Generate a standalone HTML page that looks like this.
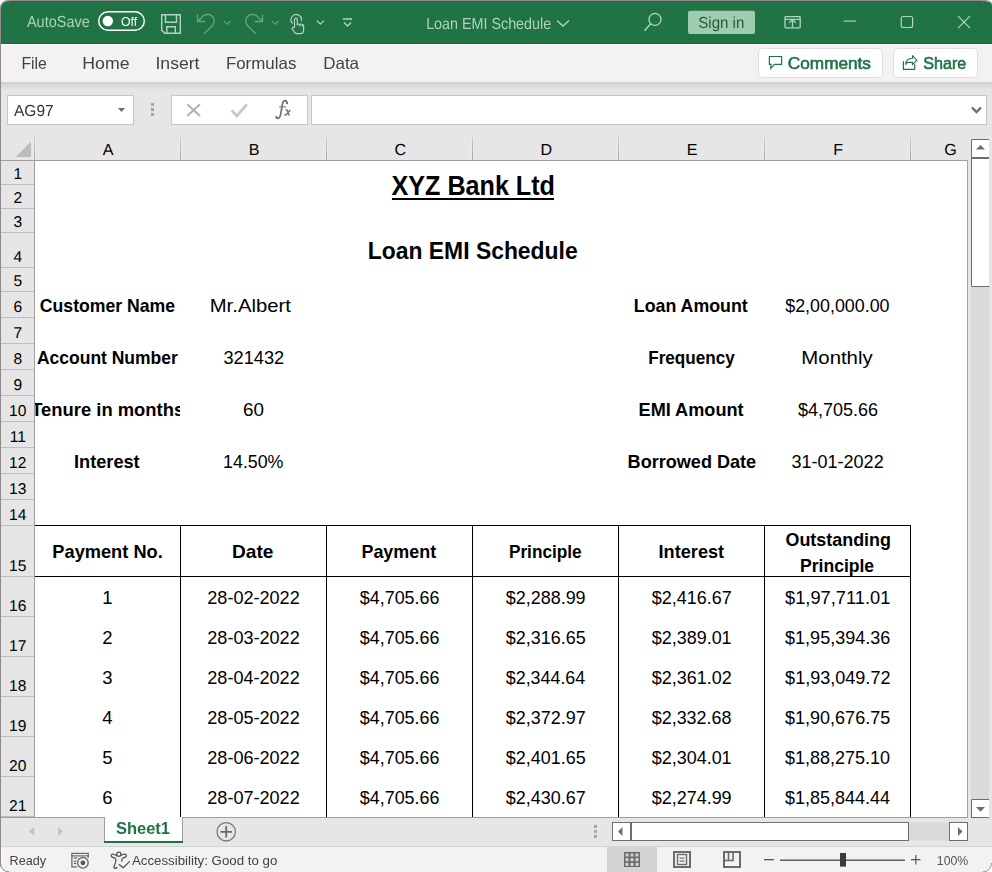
<!DOCTYPE html><html><head><meta charset="utf-8"><style>html,body{margin:0;padding:0;background:#fff;overflow:hidden}svg{display:block;font-family:"Liberation Sans",sans-serif}</style></head><body><svg width="992" height="872" viewBox="0 0 992 872"><rect x="0" y="0" width="992" height="872" fill="#ffffff"/><path d="M0.5,872 L0.5,8.5 Q0.5,0.5 8.5,0.5 L983.5,0.5 Q991.5,0.5 992,4" fill="#e6e6e6" stroke="#8f8a8c" stroke-width="1"/><rect x="1" y="9" width="991" height="863" fill="#e6e6e6"/><path d="M1,9 Q1,1 9,1 L983,1 Q991,1 992,5 L992,44 L1,44 Z" fill="#217346"/><rect x="1" y="43" width="991" height="1" fill="#176a3c"/><rect x="1" y="44" width="991" height="38" fill="#f3f2f1"/><rect x="1" y="44" width="991" height="1.5" fill="#fdfcfc"/><defs><linearGradient id="sh" x1="0" y1="0" x2="0" y2="1"><stop offset="0" stop-color="#cfcfcf"/><stop offset="1" stop-color="#e6e6e6"/></linearGradient></defs><rect x="1" y="82" width="991" height="8" fill="url(#sh)"/><rect x="7.5" y="95.5" width="126" height="29" fill="#ffffff" stroke="#c6c6c6"/><path d="M118,108 L125,108 L121.5,112 Z" fill="#6d6d6d"/><rect x="151" y="103.0" width="3" height="3" fill="#a6a6a6"/><rect x="151" y="108.0" width="3" height="3" fill="#a6a6a6"/><rect x="151" y="113.0" width="3" height="3" fill="#a6a6a6"/><rect x="171.5" y="95.5" width="136" height="29" fill="#ffffff" stroke="#c6c6c6"/><path d="M187.2,104.2 L200,116 M200,104.2 L187.2,116" stroke="#b5b5b5" stroke-width="2.2"/><path d="M231.6,110.2 L236.8,115.8 L246.8,104.3" stroke="#c8c8c8" stroke-width="2.8" fill="none"/><path d="M287.1,103 Q286.6,100.3 284.6,100.6 Q283,101 282.4,104.5 L280.7,114.2 Q279.9,118.5 277.8,118.4 Q276.4,118.3 276.3,117.3" fill="none" stroke="#6f6f6f" stroke-width="1.7"/><circle cx="287" cy="103.2" r="1.1" fill="#6f6f6f"/><circle cx="276.4" cy="117.2" r="1.1" fill="#6f6f6f"/><path d="M279.2,106.9 L286,106.9" stroke="#8a8a8a" stroke-width="1.3"/><path d="M285.6,110 Q287,109.4 287.6,111.4 L288.4,114 Q288.9,115.2 289.6,114.6 M290.4,110 Q289.4,111 287.2,113.4 Q285.6,115.2 284.3,115" fill="none" stroke="#6f6f6f" stroke-width="1.5"/><rect x="311.5" y="95.5" width="675" height="29" fill="#ffffff" stroke="#c6c6c6"/><path d="M972,107.5 L976.5,112 L981,107.5" stroke="#6d6d6d" stroke-width="2.4" fill="none"/><rect x="1" y="137" width="966" height="23" fill="#e6e6e6"/><path d="M31,141.5 L31,157 L15.5,157 Z" fill="#bdbdbd"/><defs><linearGradient id="cs" x1="0" y1="0" x2="0" y2="1"><stop offset="0" stop-color="#cfcfcf"/><stop offset="1" stop-color="#a3a3a3"/></linearGradient></defs><rect x="33" y="137" width="3" height="23" fill="#ebebeb"/><rect x="34" y="137" width="1" height="23" fill="url(#cs)"/><rect x="179" y="137" width="3" height="23" fill="#ebebeb"/><rect x="180" y="137" width="1" height="23" fill="url(#cs)"/><rect x="325" y="137" width="3" height="23" fill="#ebebeb"/><rect x="326" y="137" width="1" height="23" fill="url(#cs)"/><rect x="471" y="137" width="3" height="23" fill="#ebebeb"/><rect x="472" y="137" width="1" height="23" fill="url(#cs)"/><rect x="617" y="137" width="3" height="23" fill="#ebebeb"/><rect x="618" y="137" width="1" height="23" fill="url(#cs)"/><rect x="763" y="137" width="3" height="23" fill="#ebebeb"/><rect x="764" y="137" width="1" height="23" fill="url(#cs)"/><rect x="909" y="137" width="3" height="23" fill="#ebebeb"/><rect x="910" y="137" width="1" height="23" fill="url(#cs)"/><rect x="1" y="160" width="967" height="1" fill="#9e9e9e"/><rect x="1" y="161" width="33" height="656" fill="#e6e6e6"/><rect x="1" y="184" width="33" height="1" fill="#bebebe"/><rect x="1" y="208" width="33" height="1" fill="#bebebe"/><rect x="1" y="232" width="33" height="1" fill="#bebebe"/><rect x="1" y="267" width="33" height="1" fill="#bebebe"/><rect x="1" y="291" width="33" height="1" fill="#bebebe"/><rect x="1" y="317" width="33" height="1" fill="#bebebe"/><rect x="1" y="343" width="33" height="1" fill="#bebebe"/><rect x="1" y="369" width="33" height="1" fill="#bebebe"/><rect x="1" y="395" width="33" height="1" fill="#bebebe"/><rect x="1" y="421" width="33" height="1" fill="#bebebe"/><rect x="1" y="447" width="33" height="1" fill="#bebebe"/><rect x="1" y="473" width="33" height="1" fill="#bebebe"/><rect x="1" y="499" width="33" height="1" fill="#bebebe"/><rect x="1" y="525" width="33" height="1" fill="#bebebe"/><rect x="1" y="576" width="33" height="1" fill="#bebebe"/><rect x="1" y="616" width="33" height="1" fill="#bebebe"/><rect x="1" y="656" width="33" height="1" fill="#bebebe"/><rect x="1" y="696" width="33" height="1" fill="#bebebe"/><rect x="1" y="736" width="33" height="1" fill="#bebebe"/><rect x="1" y="776" width="33" height="1" fill="#bebebe"/><rect x="1" y="816" width="33" height="1" fill="#bebebe"/><rect x="34" y="160" width="1" height="657" fill="#9e9e9e"/><rect x="35" y="161" width="932" height="656" fill="#ffffff"/><rect x="967" y="160" width="1" height="657" fill="#a3a3a3"/><rect x="35" y="525" width="876" height="1" fill="#000"/><rect x="35" y="576" width="876" height="1" fill="#000"/><rect x="180" y="525" width="1" height="292" fill="#000"/><rect x="326" y="525" width="1" height="292" fill="#000"/><rect x="472" y="525" width="1" height="292" fill="#000"/><rect x="618" y="525" width="1" height="292" fill="#000"/><rect x="764" y="525" width="1" height="292" fill="#000"/><rect x="910" y="525" width="1" height="292" fill="#000"/><rect x="392" y="198" width="162" height="2" fill="#000"/><rect x="968" y="137" width="23" height="680" fill="#e6e6e6"/><rect x="971" y="139" width="18" height="679" fill="#dadada"/><rect x="971" y="139" width="18" height="19" fill="#ffffff"/><path d="M971.5,158 L971.5,139.5 L989,139.5" fill="none" stroke="#6e6e6e"/><path d="M976,149.5 L985,149.5 L980.5,145 Z" fill="#6e6e6e"/><rect x="971" y="158" width="18" height="129" fill="#ffffff"/><path d="M971.5,158 L971.5,286.5 L989,286.5" fill="none" stroke="#6e6e6e" stroke-linecap="square"/><rect x="971" y="157" width="18" height="2" fill="#6e6e6e"/><rect x="971" y="799" width="18" height="19" fill="#ffffff"/><path d="M989,799.5 L971.5,799.5 L971.5,817.5 L989,817.5" fill="none" stroke="#6e6e6e"/><path d="M976,807 L985,807 L980.5,811.8 Z" fill="#6e6e6e"/><rect x="1" y="817" width="991" height="29" fill="#e6e6e6"/><rect x="1" y="817" width="967" height="1" fill="#9e9e9e"/><rect x="971" y="817" width="18" height="1" fill="#6e6e6e"/><rect x="104" y="817" width="79" height="26" fill="#ffffff"/><rect x="104" y="817" width="1" height="25" fill="#9e9e9e"/><rect x="182" y="817" width="1" height="25" fill="#9e9e9e"/><rect x="104" y="841" width="79" height="2" fill="#217346"/><path d="M34.2,827 L34.2,836 L29,831.5 Z" fill="#c2c2c2"/><path d="M58.2,827 L58.2,836 L63,831.5 Z" fill="#c2c2c2"/><circle cx="226.2" cy="831.8" r="9.2" fill="none" stroke="#7a7a7a" stroke-width="1.3"/><path d="M220.5,831.8 L232,831.8 M226.2,826 L226.2,837.5" stroke="#6a6a6a" stroke-width="1.8"/><rect x="594" y="824.9" width="3" height="3" fill="#a6a6a6"/><rect x="594" y="829.9" width="3" height="3" fill="#a6a6a6"/><rect x="594" y="834.9" width="3" height="3" fill="#a6a6a6"/><rect x="612.5" y="822.5" width="355" height="18" fill="#dadada"/><rect x="612.5" y="822.5" width="18" height="18" fill="#ffffff" stroke="#6e6e6e"/><path d="M622.5,827 L622.5,836 L618,831.5 Z" fill="#6e6e6e"/><rect x="630.5" y="822.5" width="278" height="18" fill="#ffffff" stroke="#6e6e6e"/><rect x="630" y="822" width="2" height="19" fill="#6e6e6e"/><rect x="949.5" y="822.5" width="18" height="18" fill="#ffffff" stroke="#6e6e6e"/><path d="M958,827 L958,836 L962.5,831.5 Z" fill="#6e6e6e"/><rect x="1" y="846" width="991" height="26" fill="#f3f2f1"/><rect x="1" y="846" width="991" height="1" fill="#d4d4d4"/><rect x="1" y="847" width="1" height="25" fill="#fbfbfb"/><path d="M0,864 Q0.5,871.5 9,872.5 L0,872.5 Z" fill="#ffffff"/><path d="M0.5,863 Q1,871.5 9.5,872" fill="none" stroke="#8f8a8c" stroke-width="1"/><path d="M992,864 Q991.5,871.5 983,872.5 L992,872.5 Z" fill="#ffffff"/><path d="M991.5,863 Q991,871.5 982.5,872" fill="none" stroke="#9a9a9a" stroke-width="1"/><rect x="607" y="847" width="50" height="25" fill="#d4d4d4"/><rect x="624" y="852" width="16" height="15" fill="#6b6b6b"/><rect x="625.5" y="853.5" width="3" height="3" fill="#d4d4d4"/><rect x="625.5" y="858.2" width="3" height="3" fill="#d4d4d4"/><rect x="625.5" y="862.9" width="3" height="3" fill="#d4d4d4"/><rect x="630.5" y="853.5" width="3" height="3" fill="#d4d4d4"/><rect x="630.5" y="858.2" width="3" height="3" fill="#d4d4d4"/><rect x="630.5" y="862.9" width="3" height="3" fill="#d4d4d4"/><rect x="635.5" y="853.5" width="3" height="3" fill="#d4d4d4"/><rect x="635.5" y="858.2" width="3" height="3" fill="#d4d4d4"/><rect x="635.5" y="862.9" width="3" height="3" fill="#d4d4d4"/><rect x="674" y="852" width="16" height="15" fill="none" stroke="#6b6b6b" stroke-width="2"/><rect x="677.5" y="854.5" width="9" height="10" fill="none" stroke="#6b6b6b" stroke-width="1.4"/><rect x="679.5" y="857.5" width="5" height="1.2" fill="#6b6b6b"/><rect x="679.5" y="860.5" width="5" height="1.2" fill="#6b6b6b"/><rect x="724" y="852" width="16" height="15" fill="none" stroke="#6b6b6b" stroke-width="2"/><path d="M724,860.5 L733,860.5 L733,852 M728.5,852 L728.5,860" stroke="#6b6b6b" stroke-width="1.6" fill="none"/><rect x="764" y="859" width="10" height="1.3" fill="#555"/><rect x="780" y="859.5" width="125" height="1.4" fill="#555"/><rect x="840" y="853" width="6" height="13.6" fill="#3a3a3a"/><path d="M911,859.7 L920.5,859.7 M915.8,855 L915.8,864.4" stroke="#555" stroke-width="1.2"/><rect x="98.7" y="11.7" width="45.6" height="18.6" rx="9.3" fill="none" stroke="#ffffff" stroke-width="1.4"/><circle cx="107.8" cy="21" r="5.2" fill="#ffffff"/><path d="M161.7,14.7 L180.3,14.7 L180.3,33.3 L164.7,33.3 L161.7,30.3 Z" fill="none" stroke="#b3d5bf" stroke-width="1.4"/><path d="M165.5,14.7 L165.5,22.3 L176.5,22.3 L176.5,14.7" fill="none" stroke="#b3d5bf" stroke-width="1.4"/><path d="M166.8,33.3 L166.8,26.7 L175.3,26.7 L175.3,33.3" fill="none" stroke="#b3d5bf" stroke-width="1.4"/><path d="M204,34 L212,26 Q216,22 213,17 Q209,12 203,16 L197.5,21.5 M197.5,14.5 L197.5,21.5 L205,21.5" fill="none" stroke="#6aa283" stroke-width="1.3"/><path d="M224,21 L227.3,24.3 L230.6,21" fill="none" stroke="#6aa283" stroke-width="1.1"/><path d="M256,34 L248,26 Q244,22 247,17 Q251,12 257,16 L262.5,21.5 M262.5,14.5 L262.5,21.5 L255,21.5" fill="none" stroke="#6aa283" stroke-width="1.3"/><path d="M272,21 L275.3,24.3 L278.6,21" fill="none" stroke="#6aa283" stroke-width="1.1"/><path d="M292.6,23.5 A5.2,5.2 0 1 1 301.2,21.3" fill="none" stroke="#b3d5bf" stroke-width="1.2"/><path d="M294.5,27.6 L294.5,19.5 Q294.6,18.1 296,18.1 Q297.3,18.1 297.3,19.5 L297.3,25 Q297.6,23.9 298.6,24 Q299.6,24.1 299.8,25 Q300.2,23.9 301.2,24 Q302.2,24.1 302.4,25 Q302.8,24.3 303.3,24.8 Q303.6,25.1 303.6,26 L303.6,30.5 Q303.4,33.6 300.5,33.6 L297,33.6 Q295.6,33.6 294.6,32.5 L292.4,29.4 Q291.8,28.2 292.8,27.6 Q293.6,27.2 294.5,27.8 M299.8,25 L299.8,26.5 M302.4,25 L302.4,26.5" fill="none" stroke="#b3d5bf" stroke-width="1.2" stroke-linejoin="round"/><path d="M316.8,20.6 L320.3,24.1 L323.8,20.6" fill="none" stroke="#b3d5bf" stroke-width="1.3"/><path d="M343,19 L352,19 M344,22.5 L347.5,26 L351,22.5" fill="none" stroke="#b3d5bf" stroke-width="1.3"/><path d="M557,20.5 L563,26 L569,20.5" fill="none" stroke="#b3d5bf" stroke-width="1.3"/><circle cx="655" cy="19.4" r="6" fill="none" stroke="#b3d5bf" stroke-width="1.3"/><path d="M650.6,23.8 L644.5,30.8" stroke="#b3d5bf" stroke-width="1.4"/><rect x="688" y="10.7" width="67" height="23.4" rx="2" fill="#9fcbae"/><rect x="785" y="16.6" width="15.2" height="11.2" rx="0.8" fill="none" stroke="#b3d5bf" stroke-width="1.3"/><path d="M785,19.4 L800.2,19.4" stroke="#b3d5bf" stroke-width="1.2"/><path d="M792.5,27.5 L792.5,19.5 M789.3,22.8 L792.5,19.6 L795.7,22.8" fill="none" stroke="#b3d5bf" stroke-width="1.3"/><path d="M843.7,21.1 L856.1,21.1" stroke="#b3d5bf" stroke-width="1.1"/><rect x="901.2" y="16.5" width="11.4" height="11" rx="2" fill="none" stroke="#b3d5bf" stroke-width="1.2"/><path d="M958,16.2 L970,28.2 M970,16.2 L958,28.2" stroke="#b3d5bf" stroke-width="1.2"/><rect x="758.5" y="48.5" width="124" height="29" rx="4" fill="#ffffff" stroke="#e1dfdd"/><rect x="893.5" y="48.5" width="84" height="29" rx="4" fill="#ffffff" stroke="#e1dfdd"/><path d="M769.4,56.5 L781.6,56.5 L781.6,64.3 L774.4,64.3 L770.8,68.3 L771,64.3 L769.4,64.3 Z" fill="none" stroke="#217346" stroke-width="1.2" stroke-linejoin="miter"/><path d="M903.4,61.2 L903.4,69.3 L914.7,69.3 L914.7,64.3" fill="none" stroke="#217346" stroke-width="1.2"/><path d="M905.7,64.5 Q906,58.5 912.5,58.3 L912.5,55.5 L916.9,60.4 L912.5,64.6 L912.5,62.4 L908,62.4 Q906.5,62.5 905.7,64.5 Z" fill="none" stroke="#217346" stroke-width="1.1" stroke-linejoin="round"/><path d="M88.2,858 L88.2,853.3 L71.9,853.3 L71.9,866.8 L77,866.8" fill="none" stroke="#6b6b6b" stroke-width="1.3"/><rect x="71.5" y="855.3" width="17" height="1.2" fill="#6b6b6b"/><rect x="73.8" y="857.4" width="3.5" height="1.3" fill="#6b6b6b"/><rect x="73.8" y="860.6" width="2.5" height="1.3" fill="#6b6b6b"/><rect x="73.8" y="862.8" width="2.5" height="1.3" fill="#6b6b6b"/><circle cx="82.9" cy="862.8" r="5.3" fill="#f3f2f1" stroke="#6b6b6b" stroke-width="1.4"/><circle cx="82.9" cy="862.8" r="2.4" fill="#555"/><circle cx="118.85" cy="854.2" r="2.1" fill="none" stroke="#555" stroke-width="1.3"/><path d="M116.7,855.6 Q114,854 112.5,854.1 Q110.8,854.6 111.4,856.5 Q112.2,857.6 114.8,857.9 Q116,858.6 115.8,861 Q115.5,863.5 114.5,865 Q113.3,867.5 114.6,868.3 Q115.8,868.8 116.9,867.5 M120.9,855.6 Q123,854 124.4,854.1 Q126.6,854.4 126.3,856 Q125.8,857.4 123.5,857.8 Q121.8,858.3 121.8,860 L121.8,861.3 M119.3,864.4 L123.2,867.8 L129.4,861.6" fill="none" stroke="#555" stroke-width="1.3" stroke-linecap="round"/><text x="26.91" y="26.60" font-size="16.00" font-weight="normal" textLength="62.86" lengthAdjust="spacingAndGlyphs" fill="#acd4b9" text-rendering="geometricPrecision" style="will-change:transform">AutoSave</text><text x="120.94" y="26.00" font-size="12.50" font-weight="normal" textLength="16.18" lengthAdjust="spacingAndGlyphs" fill="#ffffff" style="will-change:transform">Off</text><text x="426.15" y="29.00" font-size="16.00" font-weight="normal" textLength="125.03" lengthAdjust="spacingAndGlyphs" fill="#acd4b9" text-rendering="geometricPrecision" style="will-change:transform">Loan EMI Schedule</text><text x="698.25" y="28.00" font-size="16.00" font-weight="normal" textLength="46.11" lengthAdjust="spacingAndGlyphs" fill="#1f5e3b" text-rendering="geometricPrecision" style="will-change:transform">Sign in</text><text x="21.41" y="69.00" font-size="16.50" font-weight="normal" textLength="25.44" lengthAdjust="spacingAndGlyphs" fill="#424242" style="will-change:transform">File</text><text x="82.34" y="69.00" font-size="16.50" font-weight="normal" textLength="47.18" lengthAdjust="spacingAndGlyphs" fill="#424242" style="will-change:transform">Home</text><text x="155.43" y="69.00" font-size="16.50" font-weight="normal" textLength="44.11" lengthAdjust="spacingAndGlyphs" fill="#424242" style="will-change:transform">Insert</text><text x="225.91" y="69.00" font-size="16.50" font-weight="normal" textLength="70.42" lengthAdjust="spacingAndGlyphs" fill="#424242" style="will-change:transform">Formulas</text><text x="323.16" y="69.00" font-size="16.50" font-weight="normal" textLength="35.91" lengthAdjust="spacingAndGlyphs" fill="#424242" style="will-change:transform">Data</text><text x="787.85" y="69.00" font-size="16.50" font-weight="normal" textLength="83.12" lengthAdjust="spacingAndGlyphs" fill="#217346" style="will-change:transform" stroke="#217346" stroke-width="0.6">Comments</text><text x="923.23" y="69.00" font-size="16.50" font-weight="normal" textLength="43.09" lengthAdjust="spacingAndGlyphs" fill="#217346" style="will-change:transform" stroke="#217346" stroke-width="0.6">Share</text><text x="13.99" y="115.90" font-size="16.00" font-weight="normal" textLength="39.64" lengthAdjust="spacingAndGlyphs" fill="#333333" text-rendering="geometricPrecision" style="will-change:transform">AG97</text><text x="108.20" y="155.00" font-size="16.10" font-weight="normal" text-anchor="middle" fill="#000000" text-rendering="geometricPrecision">A</text><text x="254.20" y="155.00" font-size="16.10" font-weight="normal" text-anchor="middle" fill="#000000" text-rendering="geometricPrecision">B</text><text x="400.20" y="155.00" font-size="16.10" font-weight="normal" text-anchor="middle" fill="#000000" text-rendering="geometricPrecision">C</text><text x="546.20" y="155.00" font-size="16.10" font-weight="normal" text-anchor="middle" fill="#000000" text-rendering="geometricPrecision">D</text><text x="692.20" y="155.00" font-size="16.10" font-weight="normal" text-anchor="middle" fill="#000000" text-rendering="geometricPrecision">E</text><text x="838.20" y="155.00" font-size="16.10" font-weight="normal" text-anchor="middle" fill="#000000" text-rendering="geometricPrecision">F</text><text x="950.60" y="155.00" font-size="16.10" font-weight="normal" text-anchor="middle" fill="#000000" text-rendering="geometricPrecision">G</text><text x="17.80" y="178.50" font-size="15.60" font-weight="normal" text-anchor="middle" fill="#000000" text-rendering="geometricPrecision">1</text><text x="17.80" y="202.50" font-size="15.60" font-weight="normal" text-anchor="middle" fill="#000000" text-rendering="geometricPrecision">2</text><text x="17.80" y="226.50" font-size="15.60" font-weight="normal" text-anchor="middle" fill="#000000" text-rendering="geometricPrecision">3</text><text x="17.80" y="261.50" font-size="15.60" font-weight="normal" text-anchor="middle" fill="#000000" text-rendering="geometricPrecision">4</text><text x="17.80" y="285.50" font-size="15.60" font-weight="normal" text-anchor="middle" fill="#000000" text-rendering="geometricPrecision">5</text><text x="17.80" y="311.50" font-size="15.60" font-weight="normal" text-anchor="middle" fill="#000000" text-rendering="geometricPrecision">6</text><text x="17.80" y="337.50" font-size="15.60" font-weight="normal" text-anchor="middle" fill="#000000" text-rendering="geometricPrecision">7</text><text x="17.80" y="363.50" font-size="15.60" font-weight="normal" text-anchor="middle" fill="#000000" text-rendering="geometricPrecision">8</text><text x="17.80" y="389.50" font-size="15.60" font-weight="normal" text-anchor="middle" fill="#000000" text-rendering="geometricPrecision">9</text><text x="17.80" y="415.50" font-size="15.60" font-weight="normal" text-anchor="middle" fill="#000000" text-rendering="geometricPrecision">10</text><text x="17.80" y="441.50" font-size="15.60" font-weight="normal" text-anchor="middle" fill="#000000" text-rendering="geometricPrecision">11</text><text x="17.80" y="467.50" font-size="15.60" font-weight="normal" text-anchor="middle" fill="#000000" text-rendering="geometricPrecision">12</text><text x="17.80" y="493.50" font-size="15.60" font-weight="normal" text-anchor="middle" fill="#000000" text-rendering="geometricPrecision">13</text><text x="17.80" y="519.50" font-size="15.60" font-weight="normal" text-anchor="middle" fill="#000000" text-rendering="geometricPrecision">14</text><text x="17.80" y="570.50" font-size="15.60" font-weight="normal" text-anchor="middle" fill="#000000" text-rendering="geometricPrecision">15</text><text x="17.80" y="610.50" font-size="15.60" font-weight="normal" text-anchor="middle" fill="#000000" text-rendering="geometricPrecision">16</text><text x="17.80" y="650.50" font-size="15.60" font-weight="normal" text-anchor="middle" fill="#000000" text-rendering="geometricPrecision">17</text><text x="17.80" y="690.50" font-size="15.60" font-weight="normal" text-anchor="middle" fill="#000000" text-rendering="geometricPrecision">18</text><text x="17.80" y="730.50" font-size="15.60" font-weight="normal" text-anchor="middle" fill="#000000" text-rendering="geometricPrecision">19</text><text x="17.80" y="770.50" font-size="15.60" font-weight="normal" text-anchor="middle" fill="#000000" text-rendering="geometricPrecision">20</text><text x="17.80" y="810.50" font-size="15.60" font-weight="normal" text-anchor="middle" fill="#000000" text-rendering="geometricPrecision">21</text><text x="115.95" y="834.00" font-size="16.50" font-weight="bold" textLength="54.05" lengthAdjust="spacingAndGlyphs" fill="#217346" style="will-change:transform">Sheet1</text><text x="9.50" y="865.00" font-size="12.75" font-weight="normal" textLength="36.68" lengthAdjust="spacingAndGlyphs" fill="#444444" style="will-change:transform">Ready</text><text x="131.92" y="865.00" font-size="12.75" font-weight="normal" textLength="145.43" lengthAdjust="spacingAndGlyphs" fill="#444444" style="will-change:transform">Accessibility: Good to go</text><text x="936.87" y="865.00" font-size="12.75" font-weight="normal" textLength="31.45" lengthAdjust="spacingAndGlyphs" fill="#555555" style="will-change:transform">100%</text><text x="391.58" y="195.00" font-size="27.50" font-weight="bold" textLength="163.37" lengthAdjust="spacingAndGlyphs" fill="#000000">XYZ Bank Ltd</text><text x="367.85" y="259.00" font-size="24.00" font-weight="bold" textLength="209.77" lengthAdjust="spacingAndGlyphs" fill="#000000">Loan EMI Schedule</text><text x="39.80" y="312.00" font-size="18.50" font-weight="bold" textLength="135.34" lengthAdjust="spacingAndGlyphs" fill="#000000">Customer Name</text><text x="209.72" y="312.00" font-size="18.50" font-weight="normal" textLength="81.15" lengthAdjust="spacingAndGlyphs" fill="#000000">Mr.Albert</text><text x="633.81" y="312.00" font-size="18.50" font-weight="bold" textLength="113.97" lengthAdjust="spacingAndGlyphs" fill="#000000">Loan Amount</text><text x="785.23" y="312.00" font-size="18.50" font-weight="normal" textLength="104.31" lengthAdjust="spacingAndGlyphs" fill="#000000">$2,00,000.00</text><text x="36.96" y="364.00" font-size="18.50" font-weight="bold" textLength="140.84" lengthAdjust="spacingAndGlyphs" fill="#000000">Account Number</text><text x="223.40" y="364.00" font-size="18.50" font-weight="normal" textLength="60.76" lengthAdjust="spacingAndGlyphs" fill="#000000">321432</text><text x="648.21" y="364.00" font-size="18.50" font-weight="bold" textLength="86.66" lengthAdjust="spacingAndGlyphs" fill="#000000">Frequency</text><text x="801.37" y="364.00" font-size="18.50" font-weight="normal" textLength="71.28" lengthAdjust="spacingAndGlyphs" fill="#000000">Monthly</text><clipPath id="c1"><rect x="35" y="380" width="145" height="60"/></clipPath><text x="31.22" y="416.00" font-size="18.50" font-weight="bold" textLength="152.98" lengthAdjust="spacingAndGlyphs" fill="#000000" clip-path="url(#c1)">Tenure in months</text><text x="243.07" y="416.00" font-size="18.50" font-weight="normal" textLength="20.97" lengthAdjust="spacingAndGlyphs" fill="#000000">60</text><text x="638.56" y="416.00" font-size="18.50" font-weight="bold" textLength="105.01" lengthAdjust="spacingAndGlyphs" fill="#000000">EMI Amount</text><text x="797.89" y="416.00" font-size="18.50" font-weight="normal" textLength="80.12" lengthAdjust="spacingAndGlyphs" fill="#000000">$4,705.66</text><text x="74.03" y="468.00" font-size="18.50" font-weight="bold" textLength="65.65" lengthAdjust="spacingAndGlyphs" fill="#000000">Interest</text><text x="223.11" y="468.00" font-size="18.50" font-weight="normal" textLength="60.33" lengthAdjust="spacingAndGlyphs" fill="#000000">14.50%</text><text x="627.61" y="468.00" font-size="18.50" font-weight="bold" textLength="128.49" lengthAdjust="spacingAndGlyphs" fill="#000000">Borrowed Date</text><text x="791.40" y="468.00" font-size="18.50" font-weight="normal" textLength="92.28" lengthAdjust="spacingAndGlyphs" fill="#000000">31-01-2022</text><text x="52.37" y="558.00" font-size="18.50" font-weight="bold" textLength="110.39" lengthAdjust="spacingAndGlyphs" fill="#000000">Payment No.</text><text x="232.05" y="558.00" font-size="18.50" font-weight="bold" textLength="41.39" lengthAdjust="spacingAndGlyphs" fill="#000000">Date</text><text x="361.45" y="558.00" font-size="18.50" font-weight="bold" textLength="74.70" lengthAdjust="spacingAndGlyphs" fill="#000000">Payment</text><text x="508.91" y="558.00" font-size="18.50" font-weight="bold" textLength="72.78" lengthAdjust="spacingAndGlyphs" fill="#000000">Principle</text><text x="658.55" y="558.00" font-size="18.50" font-weight="bold" textLength="65.56" lengthAdjust="spacingAndGlyphs" fill="#000000">Interest</text><text x="785.50" y="546.00" font-size="18.50" font-weight="bold" textLength="105.45" lengthAdjust="spacingAndGlyphs" fill="#000000">Outstanding</text><text x="800.03" y="572.00" font-size="18.50" font-weight="bold" textLength="74.11" lengthAdjust="spacingAndGlyphs" fill="#000000">Principle</text><text x="107.50" y="604.00" font-size="18.50" font-weight="normal" text-anchor="middle" fill="#000000">1</text><text x="207.29" y="604.00" font-size="18.50" font-weight="normal" textLength="92.45" lengthAdjust="spacingAndGlyphs" fill="#000000">28-02-2022</text><text x="359.78" y="604.00" font-size="18.50" font-weight="normal" textLength="79.69" lengthAdjust="spacingAndGlyphs" fill="#000000">$4,705.66</text><text x="505.78" y="604.00" font-size="18.50" font-weight="normal" textLength="79.85" lengthAdjust="spacingAndGlyphs" fill="#000000">$2,288.99</text><text x="651.78" y="604.00" font-size="18.50" font-weight="normal" textLength="79.94" lengthAdjust="spacingAndGlyphs" fill="#000000">$2,416.67</text><text x="785.01" y="604.00" font-size="18.50" font-weight="normal" textLength="105.39" lengthAdjust="spacingAndGlyphs" fill="#000000">$1,97,711.01</text><text x="107.50" y="644.00" font-size="18.50" font-weight="normal" text-anchor="middle" fill="#000000">2</text><text x="207.29" y="644.00" font-size="18.50" font-weight="normal" textLength="92.45" lengthAdjust="spacingAndGlyphs" fill="#000000">28-03-2022</text><text x="359.78" y="644.00" font-size="18.50" font-weight="normal" textLength="79.69" lengthAdjust="spacingAndGlyphs" fill="#000000">$4,705.66</text><text x="505.78" y="644.00" font-size="18.50" font-weight="normal" textLength="79.90" lengthAdjust="spacingAndGlyphs" fill="#000000">$2,316.65</text><text x="651.78" y="644.00" font-size="18.50" font-weight="normal" textLength="79.83" lengthAdjust="spacingAndGlyphs" fill="#000000">$2,389.01</text><text x="785.11" y="644.00" font-size="18.50" font-weight="normal" textLength="105.07" lengthAdjust="spacingAndGlyphs" fill="#000000">$1,95,394.36</text><text x="107.50" y="684.00" font-size="18.50" font-weight="normal" text-anchor="middle" fill="#000000">3</text><text x="207.29" y="684.00" font-size="18.50" font-weight="normal" textLength="92.45" lengthAdjust="spacingAndGlyphs" fill="#000000">28-04-2022</text><text x="359.78" y="684.00" font-size="18.50" font-weight="normal" textLength="79.69" lengthAdjust="spacingAndGlyphs" fill="#000000">$4,705.66</text><text x="505.78" y="684.00" font-size="18.50" font-weight="normal" textLength="79.49" lengthAdjust="spacingAndGlyphs" fill="#000000">$2,344.64</text><text x="651.78" y="684.00" font-size="18.50" font-weight="normal" textLength="79.94" lengthAdjust="spacingAndGlyphs" fill="#000000">$2,361.02</text><text x="785.11" y="684.00" font-size="18.50" font-weight="normal" textLength="105.35" lengthAdjust="spacingAndGlyphs" fill="#000000">$1,93,049.72</text><text x="107.50" y="724.00" font-size="18.50" font-weight="normal" text-anchor="middle" fill="#000000">4</text><text x="207.29" y="724.00" font-size="18.50" font-weight="normal" textLength="92.45" lengthAdjust="spacingAndGlyphs" fill="#000000">28-05-2022</text><text x="359.78" y="724.00" font-size="18.50" font-weight="normal" textLength="79.69" lengthAdjust="spacingAndGlyphs" fill="#000000">$4,705.66</text><text x="505.78" y="724.00" font-size="18.50" font-weight="normal" textLength="79.94" lengthAdjust="spacingAndGlyphs" fill="#000000">$2,372.97</text><text x="651.78" y="724.00" font-size="18.50" font-weight="normal" textLength="79.68" lengthAdjust="spacingAndGlyphs" fill="#000000">$2,332.68</text><text x="785.11" y="724.00" font-size="18.50" font-weight="normal" textLength="105.04" lengthAdjust="spacingAndGlyphs" fill="#000000">$1,90,676.75</text><text x="107.50" y="764.00" font-size="18.50" font-weight="normal" text-anchor="middle" fill="#000000">5</text><text x="207.29" y="764.00" font-size="18.50" font-weight="normal" textLength="92.45" lengthAdjust="spacingAndGlyphs" fill="#000000">28-06-2022</text><text x="359.78" y="764.00" font-size="18.50" font-weight="normal" textLength="79.69" lengthAdjust="spacingAndGlyphs" fill="#000000">$4,705.66</text><text x="505.78" y="764.00" font-size="18.50" font-weight="normal" textLength="79.90" lengthAdjust="spacingAndGlyphs" fill="#000000">$2,401.65</text><text x="651.78" y="764.00" font-size="18.50" font-weight="normal" textLength="79.83" lengthAdjust="spacingAndGlyphs" fill="#000000">$2,304.01</text><text x="785.11" y="764.00" font-size="18.50" font-weight="normal" textLength="105.00" lengthAdjust="spacingAndGlyphs" fill="#000000">$1,88,275.10</text><text x="107.50" y="804.00" font-size="18.50" font-weight="normal" text-anchor="middle" fill="#000000">6</text><text x="207.29" y="804.00" font-size="18.50" font-weight="normal" textLength="92.45" lengthAdjust="spacingAndGlyphs" fill="#000000">28-07-2022</text><text x="359.78" y="804.00" font-size="18.50" font-weight="normal" textLength="79.69" lengthAdjust="spacingAndGlyphs" fill="#000000">$4,705.66</text><text x="505.78" y="804.00" font-size="18.50" font-weight="normal" textLength="79.94" lengthAdjust="spacingAndGlyphs" fill="#000000">$2,430.67</text><text x="651.78" y="804.00" font-size="18.50" font-weight="normal" textLength="79.85" lengthAdjust="spacingAndGlyphs" fill="#000000">$2,274.99</text><text x="785.11" y="804.00" font-size="18.50" font-weight="normal" textLength="104.92" lengthAdjust="spacingAndGlyphs" fill="#000000">$1,85,844.44</text></svg></body></html>
